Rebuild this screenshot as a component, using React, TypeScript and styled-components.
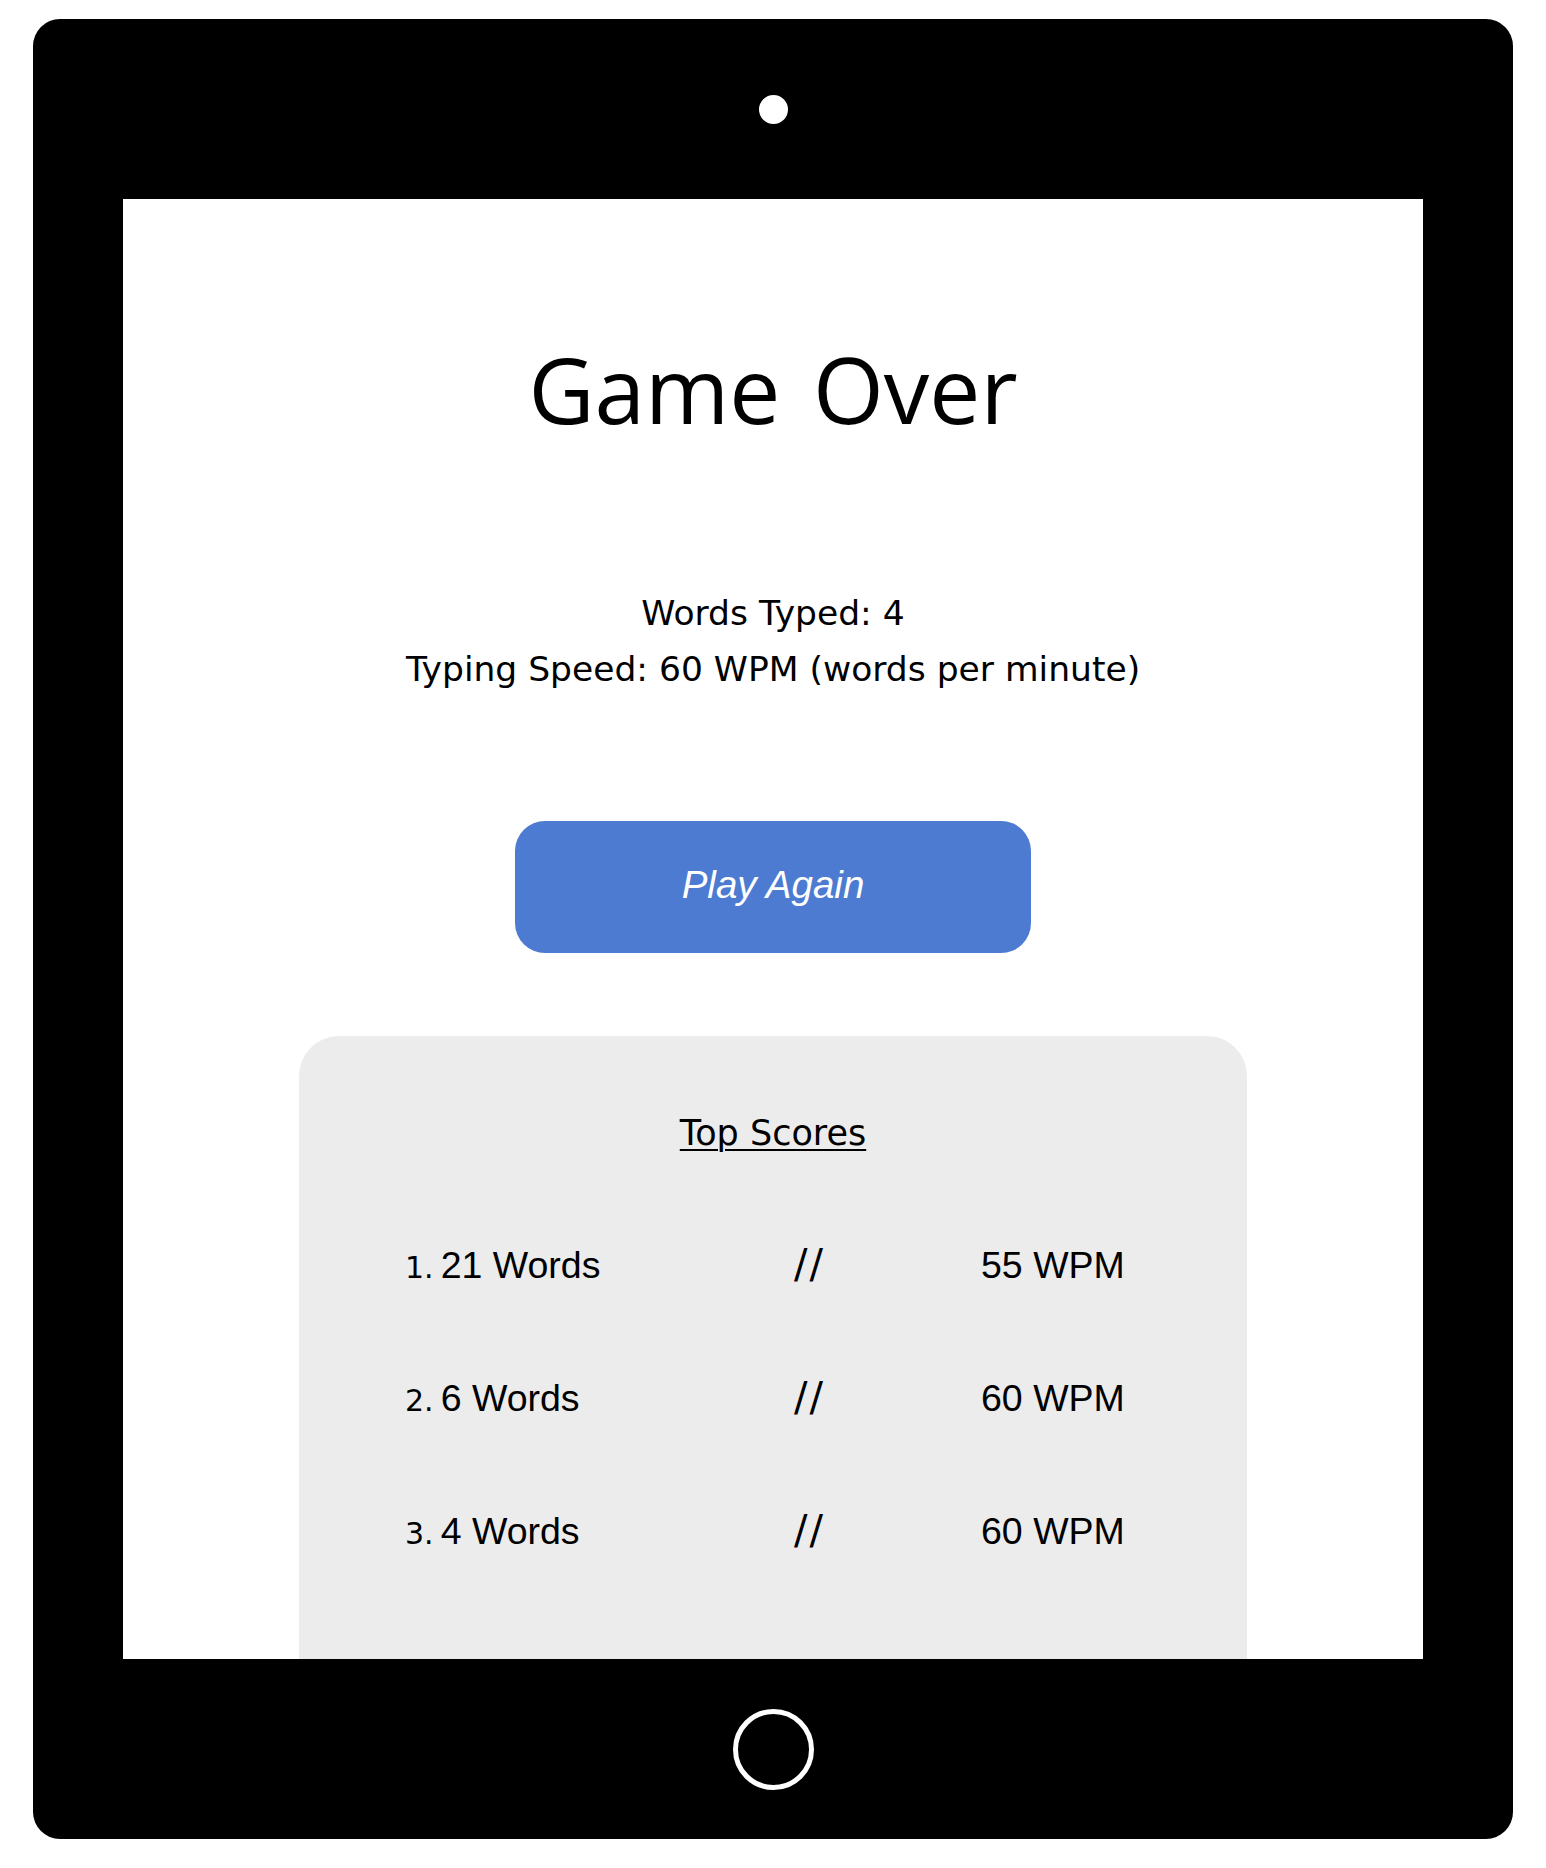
import React from "react";
import styled, { createGlobalStyle } from "styled-components";

const GlobalStyle = createGlobalStyle`
  html, body {
    margin: 0;
    padding: 0;
    background: #ffffff;
  }
  body {
    font-family: "DejaVu Sans", sans-serif;
    color: #000;
  }
`;

const Page = styled.div`
  padding-top: 19px;
  padding-bottom: 29px;
  display: flex;
  justify-content: center;
`;

const Device = styled.div`
  width: 1480px;
  background: #000;
  border-radius: 27px;
  display: flex;
  flex-direction: column;
  align-items: center;
`;

const Bezel = styled.div`
  height: 180px;
  width: 100%;
  display: flex;
  align-items: center;
  justify-content: center;
`;

const Camera = styled.div`
  width: 29px;
  height: 29px;
  border-radius: 50%;
  background: #fff;
`;

const HomeButton = styled.div`
  width: 81px;
  height: 81px;
  box-sizing: border-box;
  border-radius: 50%;
  border: 5px solid #fff;
`;

const Screen = styled.div`
  width: 1300px;
  height: 1460px;
  background: #fff;
  overflow: hidden;
  display: flex;
  flex-direction: column;
  align-items: center;
`;

const Title = styled.h1`
  margin: 128px 0 0;
  font-family: "Open Sans", sans-serif;
  font-weight: 400;
  font-size: 91px;
  line-height: normal;
  word-spacing: 9px;
`;

const Stats = styled.div`
  margin-top: 134px;
  font-family: "DejaVu Sans", sans-serif;
  font-size: 34.5px;
  line-height: 56px;
  text-align: center;
`;

const PlayButton = styled.button`
  margin-top: 124px;
  width: 516px;
  height: 132px;
  padding: 0 0 4px;
  border: none;
  border-radius: 30px;
  background: #4c7bd1;
  color: #fff;
  font-family: "Liberation Sans", Arial, sans-serif;
  font-style: italic;
  font-size: 38.5px;
  cursor: pointer;
  flex-shrink: 0;
`;

const ScorePanel = styled.section`
  margin-top: 83px;
  width: 948px;
  flex-shrink: 0;
  min-height: 700px;
  background: #ececec;
  border-radius: 40px 40px 0 0;
  padding-top: 77px;
  box-sizing: border-box;
`;

const PanelTitle = styled.h2`
  margin: 0;
  text-align: center;
  font-family: "DejaVu Sans", sans-serif;
  font-weight: 400;
  font-size: 35px;
  line-height: normal;
  text-decoration: underline;
  text-underline-offset: 4px;
  text-decoration-thickness: 2px;
`;

const ScoreList = styled.ol`
  list-style: none;
  margin: 46px 0 0;
  padding: 0 0 0 106px;
`;

const ScoreRow = styled.li`
  display: grid;
  grid-template-columns: 389px 187px 1fr;
  height: 133px;
  line-height: 133px;
  font-family: "Liberation Sans", Arial, sans-serif;
  font-size: 37.5px;
`;

const Rank = styled.span`
  font-family: "DejaVu Sans", sans-serif;
  font-size: 30px;
  line-height: 1;
  margin-right: 7px;
`;

const Separator = styled.span`
  font-family: "DejaVu Sans", sans-serif;
  font-size: 40px;
  line-height: 1;
  letter-spacing: 2px;
`;

const scores = [
  { words: 21, wpm: 55 },
  { words: 6, wpm: 60 },
  { words: 4, wpm: 60 },
];

export default function App() {
  return (
    <>
      <GlobalStyle />
      <Page>
        <Device>
          <Bezel>
            <Camera />
          </Bezel>
          <Screen>
            <Title>Game Over</Title>
            <Stats>
              <div>Words Typed: 4</div>
              <div>Typing Speed: 60 WPM (words per minute)</div>
            </Stats>
            <PlayButton>Play Again</PlayButton>
            <ScorePanel>
              <PanelTitle>Top Scores</PanelTitle>
              <ScoreList>
                {scores.map((s, i) => (
                  <ScoreRow key={i}>
                    <div>
                      <Rank>{i + 1}.</Rank>
                      {s.words} Words
                    </div>
                    <div>
                      <Separator>//</Separator>
                    </div>
                    <div>{s.wpm} WPM</div>
                  </ScoreRow>
                ))}
              </ScoreList>
            </ScorePanel>
          </Screen>
          <Bezel>
            <HomeButton />
          </Bezel>
        </Device>
      </Page>
    </>
  );
}
